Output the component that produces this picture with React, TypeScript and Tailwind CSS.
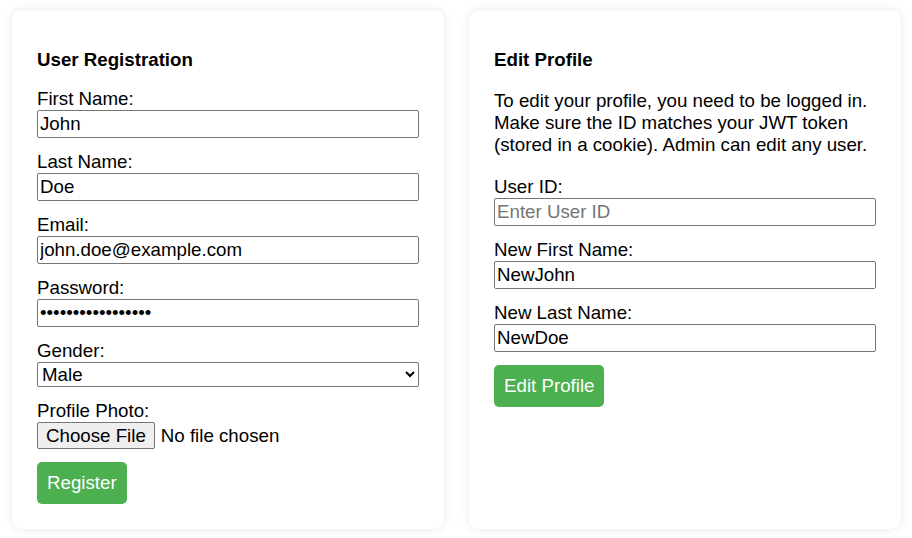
import React from "react";

const font = { fontFamily: '"Liberation Sans", Arial, sans-serif' };

function Field({ label, children }: { label: string; children: React.ReactNode }) {
  return (
    <div className="flex flex-col mb-[13px]">
      <label className="block leading-[22px]">{label}</label>
      {children}
    </div>
  );
}

const inputCls =
  "block w-full h-[28px] border border-[#767676] rounded-[2px] px-[2px] leading-[22px] text-black bg-white placeholder:text-[#757575] outline-none";

export default function App() {
  return (
    <div
      className="flex gap-[25px] pl-[12px] pr-[11px] pt-[10px] pb-[9px] bg-white text-black text-[18.72px]"
      style={font}
    >
      <div className="flex-1 bg-white rounded-[10px] shadow-[0_0_10px_rgba(0,0,0,0.1)] px-[25px] pt-[39px] pb-[25px]">
        <h3 className="font-bold leading-[22px] mb-[17px]">User Registration</h3>
        <form onSubmit={(e) => e.preventDefault()}>
          <Field label="First Name:">
            <input className={inputCls} type="text" defaultValue="John" />
          </Field>
          <Field label="Last Name:">
            <input className={inputCls} type="text" defaultValue="Doe" />
          </Field>
          <Field label="Email:">
            <input className={inputCls} type="email" defaultValue="john.doe@example.com" />
          </Field>
          <Field label="Password:">
            <input className={inputCls} type="password" defaultValue="securepassword123" />
          </Field>
          <Field label="Gender:">
            <select
              className="block w-full h-[25px] border border-[#767676] rounded-[2px] bg-white text-black leading-[22px]"
              defaultValue="Male"
            >
              <option>Male</option>
              <option>Female</option>
              <option>Other</option>
            </select>
          </Field>
          <Field label="Profile Photo:">
            <input
              type="file"
              className="block h-[27px] leading-[21px] file:h-[27px] file:bg-[#efefef] file:border file:border-[#767676] file:rounded-[2px] file:px-[8px] file:mr-[6px] file:text-black"
            />
          </Field>
          <button
            type="submit"
            className="bg-[#4CAF50] text-white rounded-[5px] px-[10px] py-[10px] leading-[21.5px]"
          >
            Register
          </button>
        </form>
      </div>

      <div className="flex-1 bg-white rounded-[10px] shadow-[0_0_10px_rgba(0,0,0,0.1)] px-[25px] pt-[39px] pb-[25px]">
        <h3 className="font-bold leading-[22px] mb-[19px]">Edit Profile</h3>
        <p className="leading-[22px] mb-[20px]">
          To edit your profile, you need to be logged in. Make sure the ID matches your JWT token (stored in a cookie). Admin can edit any user.
        </p>
        <form onSubmit={(e) => e.preventDefault()}>
          <Field label="User ID:">
            <input className={inputCls} type="text" placeholder="Enter User ID" />
          </Field>
          <Field label="New First Name:">
            <input className={inputCls} type="text" defaultValue="NewJohn" />
          </Field>
          <Field label="New Last Name:">
            <input className={inputCls} type="text" defaultValue="NewDoe" />
          </Field>
          <button
            type="submit"
            className="bg-[#4CAF50] text-white rounded-[5px] px-[10px] py-[10px] leading-[21.5px]"
          >
            Edit Profile
          </button>
        </form>
      </div>
    </div>
  );
}
